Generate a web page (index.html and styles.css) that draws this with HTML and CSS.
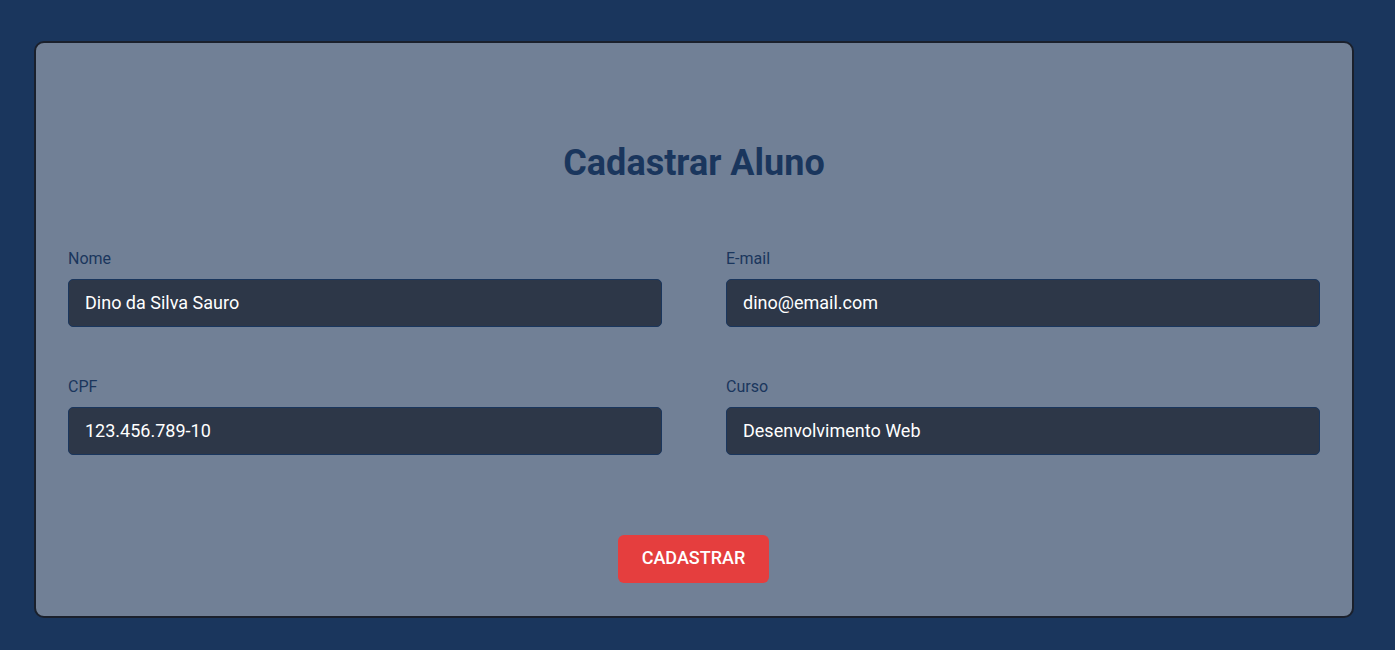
FILE: index.html
```html
<!DOCTYPE html>
<html lang="pt-BR">
<head>
<meta charset="utf-8">
<title>Cadastrar Aluno</title>
<link rel="stylesheet" href="styles.css">
</head>
<body>
<main class="page">
  <form class="card">
    <h1 class="title">Cadastrar Aluno</h1>
    <div class="grid">
      <div class="field">
        <label class="label" for="nome">Nome</label>
        <input class="input" id="nome" type="text" value="Dino da Silva Sauro">
      </div>
      <div class="field">
        <label class="label" for="email">E-mail</label>
        <input class="input" id="email" type="text" value="dino@email.com">
      </div>
      <div class="field">
        <label class="label" for="cpf">CPF</label>
        <input class="input" id="cpf" type="text" value="123.456.789-10">
      </div>
      <div class="field">
        <label class="label" for="curso">Curso</label>
        <input class="input" id="curso" type="text" value="Desenvolvimento Web">
      </div>
    </div>
    <div class="actions">
      <button class="button" type="button">CADASTRAR</button>
    </div>
  </form>
</main>
</body>
</html>
```

FILE: styles.css
```css
* { box-sizing: border-box; }
html, body {
  margin: 0;
  padding: 0;
  background: #1a365d;
  font-family: Roboto, "Liberation Sans", sans-serif;
}
.page {
  padding: 41px 41px 33px 34px;
}
.card {
  background: #718096;
  border: 2px solid #1a202c;
  border-radius: 10px;
  padding: 99px 32px 33px;
  display: flex;
  flex-direction: column;
}
.title {
  margin: 0;
  text-align: center;
  color: #1a365d;
  font-size: 36px;
  font-weight: 700;
  line-height: 42px;
}
.grid {
  display: grid;
  grid-template-columns: 1fr 1fr;
  column-gap: 64px;
  row-gap: 51px;
  margin-top: 66px;
}
.field {
  display: flex;
  flex-direction: column;
  gap: 11px;
}
.label {
  color: #1a365d;
  font-size: 16px;
  font-weight: 400;
  line-height: 18px;
}
.input {
  height: 48px;
  background: #2d3748;
  border: 1px solid #1a365d;
  border-radius: 5px;
  padding: 0 16px 2px;
  color: #ffffff;
  font-family: inherit;
  font-size: 18px;
  outline: none;
}
.actions {
  display: flex;
  justify-content: center;
  margin-top: 80px;
}
.button {
  width: 151px;
  height: 48px;
  margin-left: -1px;
  padding: 0 0 3px;
  background: #e53e3e;
  border: none;
  border-radius: 6px;
  color: #ffffff;
  font-family: inherit;
  font-size: 18px;
  font-weight: 500;
}
```
